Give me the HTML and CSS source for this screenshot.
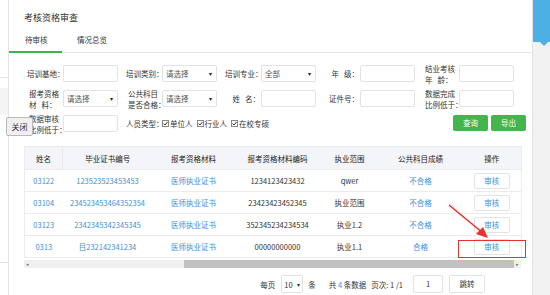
FILE: index.html
```html
<!DOCTYPE html>
<html lang="zh">
<head>
<meta charset="utf-8">
<link rel="stylesheet" href="styles.css">
</head>
<body>
<div class="page">
  <div class="side-left">
    <div class="sl-gap1"></div>
    <div class="sl-line"></div>
    <div class="sl-gap2"></div>
    <div class="sl-band"></div>
    <div class="sl-gap3"></div>
    <div class="sl-line"></div>
  </div>

  <div class="panel">
    <div class="title">考核资格审查</div>
    <div class="tabs">
      <div class="tab active">待审核</div>
      <div class="tab">情况总览</div>
    </div>

    <div class="form">
      <div class="frow">
        <div class="grp"><span class="lbl">培训基地：</span><span class="inp"></span></div>
        <div class="grp"><span class="lbl">培训类别：</span><span class="sel">请选择<i>▾</i></span></div>
        <div class="grp"><span class="lbl">培训专业：</span><span class="sel">全部<i>▾</i></span></div>
        <div class="grp"><span class="lbl">年&nbsp;&nbsp;&nbsp;级：</span><span class="inp"></span></div>
        <div class="grp"><span class="lbl two">结业考核<br>年&nbsp;&nbsp;&nbsp;龄：</span><span class="inp"></span></div>
      </div>
      <div class="frow">
        <div class="grp"><span class="lbl two">报考资格<br>材&nbsp;&nbsp;&nbsp;料：</span><span class="sel">请选择<i>▾</i></span></div>
        <div class="grp"><span class="lbl two">公共科目<br>是否合格：</span><span class="sel">请选择<i>▾</i></span></div>
        <div class="grp"><span class="lbl">姓&nbsp;&nbsp;&nbsp;名：</span><span class="inp"></span></div>
        <div class="grp"><span class="lbl">证件号：</span><span class="inp"></span></div>
        <div class="grp"><span class="lbl two">数据完成<br>比例低于：</span><span class="inp"></span></div>
      </div>
      <div class="frow r3">
        <div class="grp"><span class="lbl two">数据审核<br>比例低于：</span><span class="inp"></span></div>
        <div class="grp wide"><span class="lbl">人员类型：</span>
          <span class="cb"><svg viewBox="0 0 7 7" width="7" height="7"><rect x="0.5" y="0.5" width="6" height="6" fill="#fff" stroke="#888"/><path d="M1.5 3.6 L3 5 L5.6 1.8" fill="none" stroke="#333" stroke-width="1"/></svg>单位人</span>
          <span class="cb"><svg viewBox="0 0 7 7" width="7" height="7"><rect x="0.5" y="0.5" width="6" height="6" fill="#fff" stroke="#888"/><path d="M1.5 3.6 L3 5 L5.6 1.8" fill="none" stroke="#333" stroke-width="1"/></svg>行业人</span>
          <span class="cb"><svg viewBox="0 0 7 7" width="7" height="7"><rect x="0.5" y="0.5" width="6" height="6" fill="#fff" stroke="#888"/><path d="M1.5 3.6 L3 5 L5.6 1.8" fill="none" stroke="#333" stroke-width="1"/></svg>在校专硕</span>
        </div>
        <div class="btns">
          <span class="gbtn">查询</span>
          <span class="gbtn">导出</span>
        </div>
      </div>
    </div>

    <div class="tablewrap">
      <table class="tbl">
        <colgroup>
          <col class="c1"><col class="c2"><col class="c3"><col class="c4"><col class="c5"><col class="c6"><col class="c7">
        </colgroup>
        <thead>
          <tr><th class="fixed">姓名</th><th>毕业证书编号</th><th>报考资格材料</th><th>报考资格材料编码</th><th>执业范围</th><th>公共科目成绩</th><th>操作</th></tr>
        </thead>
        <tbody>
          <tr><td class="lk">03122</td><td class="lk">123523523453453</td><td class="lk">医师执业证书</td><td>1234123423432</td><td>qwer</td><td class="lk">不合格</td><td><span class="rv">审核</span></td></tr>
          <tr><td class="lk">03104</td><td class="lk">234523453464352354</td><td class="lk">医师执业证书</td><td>23423423452345</td><td>执业范围</td><td class="lk">不合格</td><td><span class="rv">审核</span></td></tr>
          <tr><td class="lk">03123</td><td class="lk">2342345342345345</td><td class="lk">医师执业证书</td><td>352345234234534</td><td>执业1.2</td><td class="lk">不合格</td><td><span class="rv">审核</span></td></tr>
          <tr><td class="lk">0313</td><td class="lk">目232142341234</td><td class="lk">医师执业证书</td><td>00000000000</td><td>执业1.1</td><td class="lk">合格</td><td><span class="rv">审核</span></td></tr>
        </tbody>
      </table>
      <div class="hscroll">
        <span class="arr">◂</span>
        <div class="track"><div class="thumb"></div></div>
        <span class="arr">▸</span>
      </div>
    </div>

    <div class="pager">
      <span>每页</span>
      <span class="psel">10<i>▾</i></span>
      <span>条</span>
      <span class="total">共 <b>4</b> 条数据</span>
      <span>页次:&nbsp;1&nbsp;/1</span>
      <span class="pinp">1</span>
      <span class="pbtn">跳转</span>
    </div>

    <span class="close-btn">关闭</span>
    <div class="redbox"></div>
    <svg class="arrow" width="50" height="40" viewBox="0 0 50 40">
      <line x1="2" y1="2" x2="36" y2="30" stroke="#e8302c" stroke-width="1.6"/>
      <polygon points="41,35 29,31 36,24" fill="#e8302c"/>
    </svg>
  </div>

  <div class="side-right">
    <div class="blue"></div>
  </div>
</div>
</body>
</html>
```

FILE: styles.css
```css
* { box-sizing: border-box; }
html, body { margin: 0; padding: 0; }
body {
  width: 550px;
  height: 295px;
  overflow: hidden;
  background: #fff;
  font-family: "Noto Sans CJK SC", "Noto Sans", sans-serif;
  font-size: 7.5px;
  color: #333;
}
.page { display: flex; height: 295px; }

.side-left { width: 8px; flex: none; background: #fff; }
.sl-gap1 { height: 77px; }
.sl-line { height: 1px; background: #e4e4e4; }
.sl-gap2 { height: 10px; }
.sl-band { height: 27px; background: #f3f4f6; }
.sl-gap3 { height: 147px; }

.panel {
  position: relative;
  width: 524px;
  flex: none;
  border-left: 1px solid #e3e3e3;
  background: #fff;
}
.title {
  padding: 12px 0 0 15px;
  font-size: 9px;
  line-height: 12px;
  height: 24px;
  color: #333;
}
.tabs {
  display: flex;
  margin-top: 6px;
  border-bottom: 1px solid #e6e6e6;
  height: 23px;
}
.tab {
  line-height: 20px;
  height: 23px;
  font-size: 7.5px;
  color: #333;
}
.tab.active {
  width: 53px;
  padding-left: 16px;
  border-bottom: 2px solid #3bb54a;
}
.tab + .tab { padding-left: 15px; }

.form { padding: 12px 6px 0 18px; }
.frow { display: flex; align-items: center; height: 17px; margin-bottom: 8px; }
.frow.r3 { margin-top: 2px; margin-bottom: 0; }
.grp { width: 99px; flex: none; display: flex; align-items: center; }
.grp.wide { width: auto; }
.lbl {
  width: 36px;
  flex: none;
  text-align: right;
  white-space: nowrap;
  line-height: 11px;
  padding-right: 1px;
}
.lbl.two { text-align: left; padding-left: 2px; }
.inp, .sel {
  width: 55px;
  height: 17px;
  border: 1px solid #e2e2e2;
  border-radius: 2px;
  background: #fff;
  flex: none;
}
.sel {
  display: flex;
  align-items: center;
  justify-content: space-between;
  padding: 0 4px 0 3px;
  color: #555;
}
.sel i { font-style: normal; font-size: 6px; color: #222; }
.cb { display: inline-flex; align-items: center; margin-right: 4px; }
.cb svg { margin-right: 1px; }
.btns { margin-left: auto; display: flex; gap: 3px; margin-top: -2px; }
.gbtn {
  width: 35px;
  height: 16px;
  line-height: 16px;
  text-align: center;
  background: #42b54b;
  color: #fff;
  border-radius: 2px;
}

.tablewrap { margin: 14px 11px 0 15px; }
.tbl {
  width: 497px;
  border-collapse: collapse;
  table-layout: fixed;
  border: 1px solid #ebebeb;
}
.c1 { width: 38px; } .c2 { width: 90px; } .c3 { width: 82px; } .c4 { width: 86px; }
.c5 { width: 58px; } .c6 { width: 84px; } .c7 { width: 59px; }
.tbl th {
  height: 23px;
  background: #f4f5f8;
  font-weight: normal;
  color: #222;
  text-align: center;
  padding: 0;
}
.tbl th.fixed { border-right: 1px solid #e9e9e9; }
.tbl td {
  height: 22px;
  text-align: center;
  padding: 0;
  border-top: 1px solid #ececec;
  color: #333;
  white-space: nowrap;
}
.tbl td.lk { color: #3c8fdd; }
.rv {
  display: inline-block;
  width: 36px;
  height: 16px;
  line-height: 14px;
  border: 1px solid #e3e3e3;
  border-radius: 2px;
  color: #3c8fdd;
  background: #fff;
}
.hscroll {
  display: flex;
  align-items: center;
  height: 8px;
  width: 497px;
  margin-top: 2px;
  background: #f0f0f0;
}
.arr { width: 7px; font-size: 5px; color: #777; text-align: center; line-height: 8px; }
.track { flex: 1; height: 8px; }
.thumb { margin-left: 153px; width: 330px; height: 8px; background: #c1c1c1; }

.pager {
  display: flex;
  align-items: center;
  justify-content: flex-end;
  padding-right: 47px;
  margin-top: 7px;
  height: 18px;
  gap: 5px;
}
.psel {
  width: 22px;
  height: 18px;
  border: 1px solid #e2e2e2;
  border-radius: 2px;
  display: flex;
  align-items: center;
  justify-content: space-between;
  padding: 0 2px 0 2px;
  margin-left: 1px;
}
.psel i { font-style: normal; font-size: 6px; }
.total { margin-left: 8px; }
.total b { font-weight: normal; color: #3c8fdd; }
.pinp {
  width: 30px;
  height: 18px;
  border: 1px solid #e2e2e2;
  border-radius: 2px;
  text-align: center;
  line-height: 16px;
  margin-left: 5px;
}
.pbtn {
  width: 36px;
  height: 18px;
  border: 1px solid #e2e2e2;
  border-radius: 2px;
  text-align: center;
  line-height: 16px;
  margin-left: 1px;
}

.close-btn {
  position: absolute;
  left: -3px;
  top: 117px;
  width: 27px;
  height: 19px;
  line-height: 17px;
  text-align: center;
  font-size: 8px;
  color: #333;
  background: #f0f0f0;
  border: 1px solid #b9b9b9;
  border-radius: 2px;
}
.redbox {
  position: absolute;
  left: 449px;
  top: 240px;
  width: 68px;
  height: 18px;
  border: 1.5px solid #e8302c;
}
.arrow {
  position: absolute;
  left: 438px;
  top: 203px;
}

.side-right {
  flex: 1;
  background: #f2f2f2;
  border-left: 1px solid #e2e2e2;
  position: relative;
}
.blue { height: 42px; background: #4cb0e4; position: relative; }
.blue::after {
  content: "";
  position: absolute;
  left: 7px;
  bottom: -4px;
  border-left: 4px solid transparent;
  border-right: 4px solid transparent;
  border-top: 4px solid #4cb0e4;
}
```
